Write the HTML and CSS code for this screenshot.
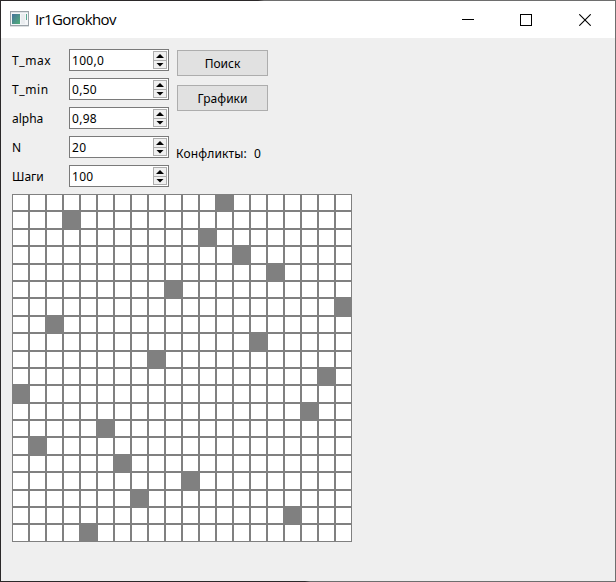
FILE: index.html
```html
<!DOCTYPE html>
<html lang="ru">
<head>
<meta charset="utf-8">
<title>Ir1Gorokhov</title>
<link rel="stylesheet" href="styles.css">
</head>
<body>
<div class="window">
  <header class="titlebar">
    <svg class="app-icon" width="19" height="16" viewBox="0 0 19 16">
      <defs><linearGradient id="g" x1="0" y1="0" x2="1" y2="1"><stop offset="0" stop-color="#44719c"/><stop offset="1" stop-color="#52b078"/></linearGradient></defs>
      <rect x=".5" y=".5" width="18" height="14" fill="#f4f6f8" stroke="#9aa2a8"/>
      <rect x="1" y="1" width="17" height="1" fill="#dfe3e7"/>
      <rect x="2" y="3" width="8" height="10" fill="url(#g)"/>
      <rect x="11" y="3" width="4" height="10" fill="#e9ecef"/>
      <rect x="16" y="3" width="1" height="6" fill="#58a890"/>
      <rect x="0" y="15" width="19" height="1" fill="#dcdfe1"/>
    </svg>
    <span class="title">Ir1Gorokhov</span>
    <div class="controls">
      <svg width="12" height="12" shape-rendering="crispEdges"><path d="M0 5.5H12" stroke="#000"/></svg>
      <svg width="12" height="12" shape-rendering="crispEdges"><rect x=".5" y=".5" width="11" height="11" fill="none" stroke="#000"/></svg>
      <svg width="12" height="12"><path d="M.3 .3L11.7 11.7M11.7 .3L.3 11.7" stroke="#000" stroke-width="1.1"/></svg>
    </div>
  </header>
  <main class="content">
    <section class="panel">
      <div class="params">
        <label class="row"><span class="name wide">T_max</span><span class="spin"><span class="value">100,0</span><span class="arrows"><i class="up"></i><i class="down"></i></span></span></label>
        <label class="row"><span class="name wide">T_min</span><span class="spin"><span class="value">0,50</span><span class="arrows"><i class="up"></i><i class="down"></i></span></span></label>
        <label class="row"><span class="name">alpha</span><span class="spin"><span class="value">0,98</span><span class="arrows"><i class="up"></i><i class="down"></i></span></span></label>
        <label class="row"><span class="name">N</span><span class="spin"><span class="value">20</span><span class="arrows"><i class="up"></i><i class="down"></i></span></span></label>
        <label class="row"><span class="name">Шаги</span><span class="spin"><span class="value">100</span><span class="arrows"><i class="up"></i><i class="down"></i></span></span></label>
      </div>
      <div class="actions">
        <button class="btn">Поиск</button>
        <button class="btn">Графики</button>
        <div class="conflicts"><span>Конфликты:</span><span>0</span></div>
      </div>
    </section>
    <div class="board" id="board"></div>
  </main>
</div>
<script src="board.js"></script>
</body>
</html>
```
FILE: styles.css
```css
* { box-sizing: border-box; }
body { margin: 0; }
.window {
  width: 616px; height: 582px;
  padding: 1px;
  background:
    linear-gradient(#efefef, #efefef) 1px 1px / 614px 580px no-repeat,
    linear-gradient(#6e6e6e, #6e6e6e) 615px 0 / 1px 582px no-repeat,
    linear-gradient(90deg, #2b2829 258px, #6e6e6e 264px) 0 0 / 616px 1px no-repeat,
    linear-gradient(90deg, #2b2829 305px, #6e6e6e 310px) 0 581px / 616px 1px no-repeat,
    #2b2829;
  font: 12px/16px "Noto Sans", sans-serif;
  color: #000;
  overflow: hidden;
}
.titlebar { display: flex; align-items: center; height: 37px; padding: 0 24px 0 9px; background: #fff; }
.app-icon { margin-top: -1px; }
.title { margin: -2px 0 0 6px; font: 15px/20px "Open Sans", sans-serif; letter-spacing: -0.62px; }
.controls { display: flex; gap: 47px; margin-left: auto; }
.controls svg { display: block; }
.controls svg:first-child { margin-right: -1px; }
.content { padding: 11px 11px 0; }
.panel { display: flex; height: 145px; }
.params { display: flex; flex-direction: column; gap: 7px; }
.row { display: flex; align-items: center; height: 22px; }
.name { width: 57px; padding-top: 1px; }
.wide { letter-spacing: 0.6px; }
.spin { display: flex; width: 100px; height: 22px; padding: 1px 1px 1px 2px; background: #fff; border: 1px solid #7a7a7a; align-items: center; }
.value { flex: 1; padding-top: 1px; letter-spacing: 0.3px; }
.arrows { width: 14px; height: 18px; display: flex; flex-direction: column; }
.arrows i { height: 10px; border: 1px solid #adadad; background: #f0f0f0; display: flex; justify-content: center; align-items: center; }
.arrows i + i { height: 8px; border-top: 0; }
.arrows i::before { content: ""; width: 8px; height: 4px; background: #000; }
.up::before { clip-path: polygon(50% 0, 100% 100%, 0 100%); }
.down::before { clip-path: polygon(0 0, 100% 0, 50% 100%); }
.actions { display: flex; flex-direction: column; gap: 9px; margin-left: 8px; padding-top: 1px; }
.btn { width: 91px; height: 26px; padding: 1px 0 0; border: 1px solid #adadad; background: #e1e1e1; font: inherit; color: inherit; }
.conflicts { display: flex; gap: 7px; margin: 26px 0 0 -1px; letter-spacing: 0.15px; }
.board { display: grid; grid-template-columns: repeat(20, 17px); grid-template-rows: repeat(20, 17.4px); width: 340px; }
.cell { border: 1px solid #808080; background: #fff; }
.queen { background: #808080; }
```
FILE: board.js
```js
// Column of the queen in each row, top to bottom
const queens = [12, 3, 11, 13, 15, 9, 19, 2, 14, 8, 18, 0, 17, 5, 1, 6, 10, 7, 16, 4];
const board = document.getElementById("board");
for (const q of queens) {
  for (let c = 0; c < queens.length; c++) {
    const cell = document.createElement("div");
    cell.className = c === q ? "cell queen" : "cell";
    board.append(cell);
  }
}
```
